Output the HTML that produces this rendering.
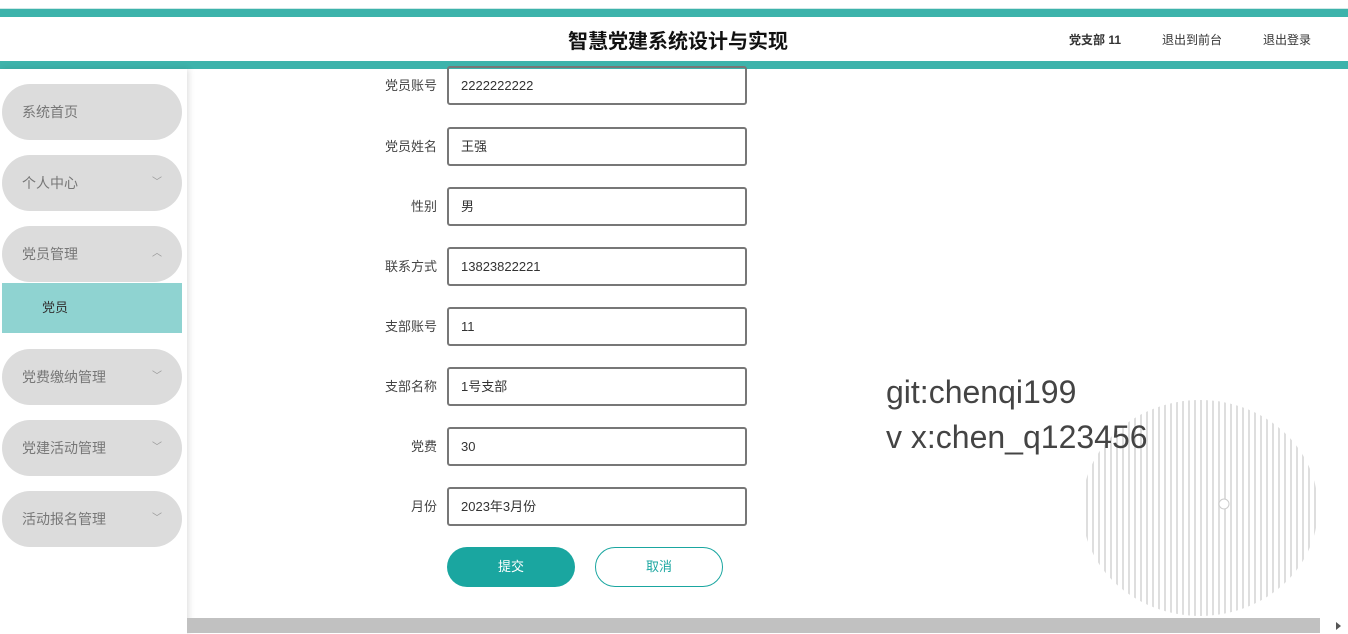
<!DOCTYPE html>
<html><head><meta charset="utf-8"><style>
*{box-sizing:border-box;margin:0;padding:0}
body{width:1348px;height:634px;overflow:hidden;background:#fff;font-family:"Liberation Sans","Noto Sans CJK SC",sans-serif;position:relative}
.t1{position:absolute;left:0;top:8px;width:1348px;height:1px;background:#cfe9e7}
.t2{position:absolute;left:0;top:9px;width:1348px;height:8px;background:#3db3ab}
.t3{position:absolute;left:0;top:61px;width:1348px;height:8px;background:#3db3ab}
.title{position:absolute;left:0;width:1356px;top:25px;text-align:center;font-size:20px;font-weight:bold;color:#111}
.hr{position:absolute;top:31px;font-size:12px;color:#333}
.side{position:absolute;left:0;top:69px;width:187px;height:565px;background:#fff;box-shadow:2px 0 6px rgba(0,0,0,.12)}
.pill{position:absolute;left:2px;width:180px;height:56px;border-radius:28px;background:#dcdcdc;color:#777;font-size:14px;line-height:56px;padding-left:20px}
.pill .ar{position:absolute;right:20px;top:0;font-size:10px;color:#999}
.sub{position:absolute;left:2px;top:283px;width:180px;height:50px;background:#8fd3d1;color:#333;font-size:13px;line-height:50px;padding-left:40px}
.lab{position:absolute;width:120px;left:317px;text-align:right;font-size:13px;color:#444}
.inp{position:absolute;left:447px;width:300px;height:39px;border:2px solid #777;border-radius:3px;font-size:13px;color:#333;line-height:35px;padding-left:12px}
.btn{position:absolute;top:547px;width:128px;height:40px;border-radius:20px;text-align:center;line-height:40px;font-size:13px}
.wm{position:absolute;left:886px;font-size:32px;color:#444}
.sb{position:absolute;left:187px;top:618px;width:1133px;height:15px;background:#c1c1c1}
</style></head><body>
<div class="t1"></div><div class="t2"></div><div class="t3"></div>
<div class="title">智慧党建系统设计与实现</div>
<div class="hr" style="left:1069px;font-weight:bold">党支部 11</div>
<div class="hr" style="left:1162px">退出到前台</div>
<div class="hr" style="left:1263px">退出登录</div>

<div class="lab" style="top:75px">党员账号</div><div class="inp" style="top:66px">2222222222</div>
<div class="lab" style="top:136px">党员姓名</div><div class="inp" style="top:127px">王强</div>
<div class="lab" style="top:196px">性别</div><div class="inp" style="top:187px">男</div>
<div class="lab" style="top:256px">联系方式</div><div class="inp" style="top:247px">13823822221</div>
<div class="lab" style="top:316px">支部账号</div><div class="inp" style="top:307px">11</div>
<div class="lab" style="top:376px">支部名称</div><div class="inp" style="top:367px">1号支部</div>
<div class="lab" style="top:436px">党费</div><div class="inp" style="top:427px">30</div>
<div class="lab" style="top:496px">月份</div><div class="inp" style="top:487px">2023年3月份</div>
<div class="btn" style="left:447px;background:#1aa6a0;color:#fff">提交</div>
<div class="btn" style="left:595px;border:1px solid #1aa6a0;color:#1aa6a0;line-height:38px">取消</div>

<svg style="position:absolute;left:1080px;top:400px" width="240" height="218">
<defs><pattern id="p" width="6" height="10" patternUnits="userSpaceOnUse"><rect x="0" width="2" height="10" fill="#dedede"/></pattern></defs>
<ellipse cx="120" cy="108" rx="118" ry="108" fill="url(#p)"/>
<circle cx="144" cy="104" r="5" fill="#fff" stroke="#ccc"/>
</svg>
<div class="wm" style="top:374px">git:chenqi199</div>
<div class="wm" style="top:419px">v x:chen_q123456</div>

<div class="side">
<div class="pill" style="top:15px">系统首页</div>
<div class="pill" style="top:86px">个人中心<span class="ar">﹀</span></div>
<div class="pill" style="top:157px">党员管理<span class="ar">︿</span></div>
<div class="pill" style="top:280px">党费缴纳管理<span class="ar">﹀</span></div>
<div class="pill" style="top:351px">党建活动管理<span class="ar">﹀</span></div>
<div class="pill" style="top:422px">活动报名管理<span class="ar">﹀</span></div>
</div>
<div class="sub">党员</div>
<div class="sb"></div>
<div style="position:absolute;left:1336px;top:622px;border-left:5px solid #555;border-top:4px solid transparent;border-bottom:4px solid transparent"></div>
</body></html>
